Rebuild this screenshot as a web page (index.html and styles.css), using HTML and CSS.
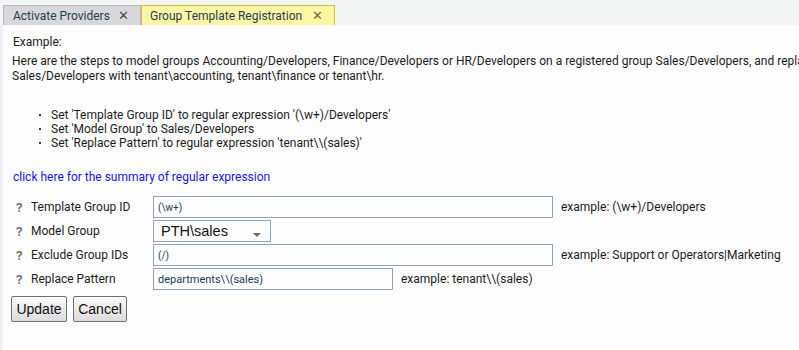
FILE: index.html
```html
<!DOCTYPE html>
<html>
<head>
<meta charset="utf-8">
<link rel="stylesheet" href="styles.css">
</head>
<body>
<div class="tabs">
  <div class="tab tab-off"><span class="tab-label">Activate Providers</span><span class="tab-x">✕</span></div>
  <div class="tab tab-on"><span class="tab-label">Group Template Registration</span><span class="tab-x">✕</span></div>
</div>
<div class="panel">
  <div class="heading">Example:</div>
  <p class="intro">Here are the steps to model groups Accounting/Developers, Finance/Developers or HR/Developers on a registered group Sales/Developers, and replace Sales/Developers with tenant\accounting, tenant\finance or tenant\hr.</p>
  <ul class="steps">
    <li>Set 'Template Group ID' to regular expression '(\w+)/Developers'</li>
    <li>Set 'Model Group' to Sales/Developers</li>
    <li>Set 'Replace Pattern' to regular expression 'tenant\\(sales)'</li>
  </ul>
  <a class="link" href="#">click here for the summary of regular expression</a>
  <div class="form">
    <div class="row">
      <span class="help">?</span><span class="label">Template Group ID</span>
      <div class="field wide small">(\w+)</div>
      <span class="hint">example: (\w+)/Developers</span>
    </div>
    <div class="row">
      <span class="help">?</span><span class="label">Model Group</span>
      <div class="field select">PTH\sales<span class="arrow"></span></div>
    </div>
    <div class="row">
      <span class="help">?</span><span class="label">Exclude Group IDs</span>
      <div class="field wide small">(/)</div>
      <span class="hint">example: Support or Operators|Marketing</span>
    </div>
    <div class="row">
      <span class="help">?</span><span class="label">Replace Pattern</span>
      <div class="field mid">departments\\(sales)</div>
      <span class="hint">example: tenant\\(sales)</span>
    </div>
  </div>
  <div class="buttons">
    <button class="btn btn-update">Update</button>
    <button class="btn btn-cancel">Cancel</button>
  </div>
</div>
</body>
</html>
```

FILE: styles.css
```css
html, body {
  margin: 0;
  padding: 0;
}
body {
  background: #eef1f3;
  font-family: Roboto, "Liberation Sans", sans-serif;
  font-size: 12px;
  color: #1c1c1c;
  width: 799px;
  height: 350px;
  overflow: hidden;
}
.tabs {
  display: flex;
  padding: 5px 0 0 3px;
  height: 20px;
  background: #f4f5f5;
}
.tab {
  box-sizing: border-box;
  height: 20px;
  display: flex;
  align-items: center;
  padding-left: 9px;
  font-size: 12px;
  color: #283c55;
  border: 1px solid #b9b9bd;
  border-bottom: none;
}
.tab-off {
  width: 138px;
  background: #d8d8dc;
}
.tab-on {
  width: 194px;
  background: #fdf7a3;
  border-color: #cfc04a;
  padding-left: 8px;
}
.tab-label {
  flex: 1;
}
.tab-x {
  width: 22px;
  font-size: 13px;
  color: #4a4a4a;
  text-align: left;
}
.tab-on .tab-x { color: #6e6a3a; }
.panel {
  margin-left: 3px;
  background: #fcfdfc;
  height: 325px;
  padding: 10px 0 0 9px;
  box-sizing: border-box;
  overflow: hidden;
}
.heading {
  line-height: 15px;
  padding-left: 1px;
}
.intro {
  margin: 4px 0 0 0;
  line-height: 15px;
  width: 820px;
}
.steps {
  margin: 24px 0 0 0;
  padding-left: 39px;
  line-height: 14px;
  list-style: none;
}
.steps li {
  position: relative;
}
.steps li::before {
  content: "";
  position: absolute;
  left: -12px;
  top: 6px;
  width: 2px;
  height: 2px;
  background: #333;
}
.link {
  display: block;
  margin-top: 20px;
  padding-left: 1px;
  color: #1515ee;
  text-decoration: none;
  line-height: 14px;
}
.form {
  margin-top: 12px;
  display: flex;
  flex-direction: column;
  gap: 2px;
  padding-left: 4px;
}
.row {
  display: flex;
  align-items: center;
  height: 22px;
}
.help {
  width: 15px;
  font-weight: bold;
  color: #777;
  font-size: 13px;
}
.label {
  width: 122px;
  font-size: 12px;
  color: #1c1c1c;
}
.field {
  box-sizing: border-box;
  height: 22px;
  border: 1px solid #8ea3bd;
  background: #fdfdfd;
  display: flex;
  align-items: center;
  padding-left: 4px;
  color: #23395a;
  font-size: 11px;
}
.wide { width: 400px; }
.mid { width: 240px; }
.small { font-size: 10px; }
.select {
  width: 118px;
  position: relative;
  color: #111;
  font-family: "Liberation Sans", Arial, sans-serif;
  font-size: 14.5px;
  padding-left: 7px;
}
.arrow {
  position: absolute;
  right: 9px;
  top: 12px;
  width: 0;
  height: 0;
  border-left: 4px solid transparent;
  border-right: 4px solid transparent;
  border-top: 4px solid #666;
}
.hint {
  margin-left: 8px;
  font-size: 12px;
}
.buttons {
  display: flex;
  gap: 6px;
  margin-top: 6px;
  margin-left: -1px;
}
.btn {
  box-sizing: border-box;
  height: 26px;
  font-family: "Liberation Sans", Arial, sans-serif;
  font-size: 14px;
  color: #111;
  background: linear-gradient(#fafafa, #dcdcdc);
  border: 1px solid #6f6f6f;
  border-radius: 2px;
  padding: 0;
}
.btn-update { width: 56px; }
.btn-cancel { width: 54px; }
```
